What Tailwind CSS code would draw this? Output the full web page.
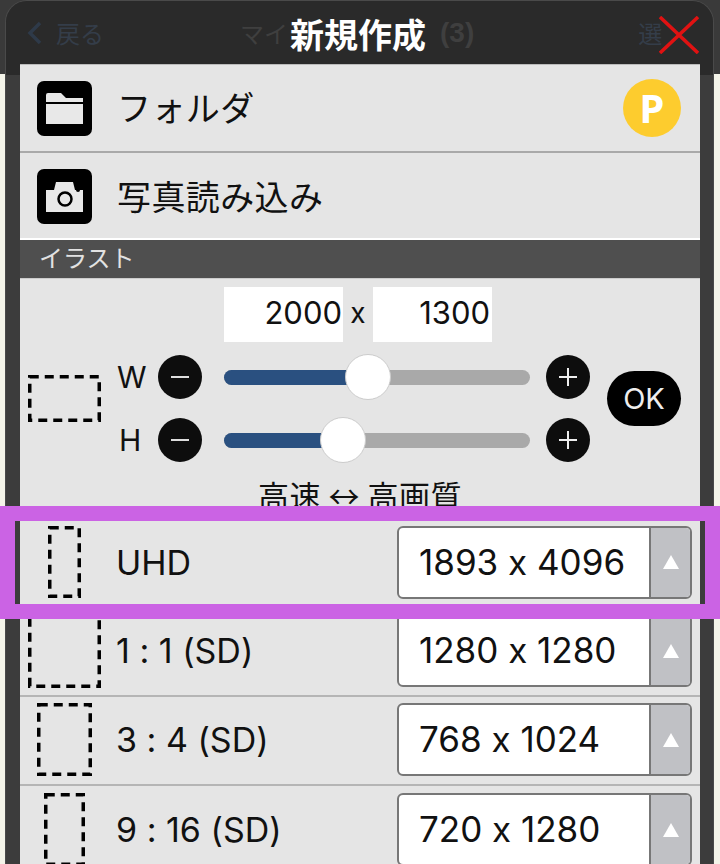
<!DOCTYPE html>
<html lang="ja">
<head>
  <meta charset="UTF-8" />
  <meta name="viewport" content="width=device-width, initial-scale=1.0" />
  <title>新規作成</title>
  <script src="https://cdn.jsdelivr.net/npm/@tailwindcss/browser@4"></script>
</head>
<body class="relative w-[720px] h-[864px] overflow-hidden bg-[#f4f4e9] font-['Inter','Noto_Sans_CJK_JP',sans-serif] [font-variant-ligatures:no-contextual] text-[#111]">
  <!-- page nav behind the sheet -->
  <div class="absolute inset-x-0 top-0 h-[74px] bg-[#3a3a3a]"></div>

  <div class="relative ml-[5px] w-[709px] h-[864px] overflow-hidden rounded-t-[22px] border-t border-x border-[#4a4a4a] bg-[#3c3c3c]">
    <div class="absolute inset-x-0 top-0 h-[74px] bg-[#2a2a2a]"></div>
    <!-- header -->
    <div class="relative flex items-center h-[63px] text-[#343d49]">
      <svg class="ml-[20px] w-[16px] h-[24px]" viewBox="0 0 16 24" fill="none" stroke="#2e3a49" stroke-width="3.5"><path d="M14 2 4 12l10 10" /></svg>
      <span class="ml-[14px] text-[24px] font-['Noto_Sans_CJK_JP']">戻る</span>
      <span class="ml-[136px] text-[24px] text-[#3f3f3f] font-['Noto_Sans_CJK_JP']">マイ</span>
      <span class="ml-[152px] text-[28px] font-bold text-[#3f3f3f] font-['Liberation_Sans']">(3)</span>
      <span class="ml-[164px] text-[24px] font-['Noto_Sans_CJK_JP']">選</span>
      <div class="absolute inset-0 flex items-center justify-center pr-[3px] pt-[2px] text-[34px] font-bold text-white font-['Noto_Sans_CJK_JP'] leading-none">新規作成</div>
      <svg class="absolute left-[653px] top-[15px] w-[40px] h-[38px]" viewBox="0 0 40 38" fill="none" stroke="#e01212" stroke-width="3.5"><path d="m1 1 38 36M39 1 1 37" /></svg>
    </div>

    <div class="relative ml-[14px] w-[680px] bg-[#e5e5e5]">
      <!-- folder -->
      <div class="flex items-center h-[89px] border-b-2 border-[#a9a9a9] border-t border-t-[#bbb]">
        <svg class="ml-[17px] w-[55px] h-[55px] shrink-0" viewBox="0 0 55 55">
          <rect width="55" height="55" rx="7" fill="#000" />
          <path d="M9 21v-7q0-2 2-2h13l5 5h17v4z" fill="#e8e8e8" />
          <rect x="9" y="23" width="37" height="20" fill="#e8e8e8" />
        </svg>
        <span class="ml-[25px] mb-[2px] text-[34px] tracking-[0.4px] font-['Noto_Sans_CJK_JP'] leading-none">フォルダ</span>
        <div class="ml-auto mr-[19px] flex items-center justify-center w-[58px] h-[58px] rounded-full bg-[#fdcc2e] text-white text-[40px] font-bold font-['Noto_Sans'] leading-none">P</div>
      </div>
      <!-- photo import -->
      <div class="flex items-center h-[87px] pt-[2px] border-b-2 border-white">
        <svg class="ml-[17px] w-[55px] h-[55px] shrink-0" viewBox="0 0 55 55">
          <rect width="55" height="55" rx="7" fill="#000" />
          <path d="M9 21h8l2-8h17l2 8h8v22H9z" fill="#e8e8e8" />
          <circle cx="28" cy="30" r="6.5" fill="#e8e8e8" stroke="#000" stroke-width="2.5" />
          <circle cx="41" cy="21" r="2" fill="#000" />
        </svg>
        <span class="ml-[25px] mb-[2px] text-[34px] tracking-[0.4px] font-['Noto_Sans_CJK_JP'] leading-none">写真読み込み</span>
      </div>
      <!-- section -->
      <div class="flex items-center h-[38px] pl-[19px] pb-[4px] bg-[#4f4f4f] text-[#e2e2e2] text-[24px] font-['Noto_Sans_CJK_JP'] leading-none">イラスト</div>

      <!-- custom size panel -->
      <div class="h-[241px] pt-[8px] border-t border-[#ccc] overflow-hidden">
        <div class="flex items-center ml-[204px] h-[55px] text-[31px]">
          <div class="w-[119px] h-[55px] bg-white flex items-center justify-end pr-[1px] pb-[3px]">2000</div>
          <div class="w-[30px] text-center text-[28px] pb-[3px]">x</div>
          <div class="w-[119px] h-[55px] bg-white flex items-center justify-end pr-[2px] pb-[3px]">1300</div>
        </div>
        <div class="flex mt-[13px]">
          <svg class="ml-[8px] mt-[20px] w-[73px] h-[47px] shrink-0" viewBox="0 0 73 47" fill="none" stroke="#000" stroke-width="3.5"><rect x="1.75" y="1.75" width="69.5" height="43.5" stroke-dasharray="9 6" /></svg>
          <div class="flex flex-col gap-[19px]">
            <div class="flex items-center h-[44px]">
              <span class="ml-[16px] w-[41px] text-[30px]">W</span>
              <svg class="w-[44px] h-[44px]" viewBox="0 0 44 44"><circle cx="22" cy="22" r="22" fill="#0d0d0d" /><path d="M13 22h18" stroke="#ddd" stroke-width="2" /></svg>
              <div class="relative ml-[22px] w-[306px] h-[15px] rounded-full bg-[#a9a9a9]">
                <div class="h-full w-[144px] rounded-l-full bg-[#2a5080]"></div>
                <div class="absolute left-[121px] top-[-16px] w-[46px] h-[46px] rounded-full bg-white border border-[#ccc]"></div>
              </div>
              <svg class="ml-[16px] w-[44px] h-[44px]" viewBox="0 0 44 44"><circle cx="22" cy="22" r="22" fill="#0d0d0d" /><path d="M13 22h18M22 13v18" stroke="#eee" stroke-width="2" /></svg>
            </div>
            <div class="flex items-center h-[44px]">
              <span class="ml-[18px] w-[39px] text-[30px]">H</span>
              <svg class="w-[44px] h-[44px]" viewBox="0 0 44 44"><circle cx="22" cy="22" r="22" fill="#0d0d0d" /><path d="M13 22h18" stroke="#ddd" stroke-width="2" /></svg>
              <div class="relative ml-[22px] w-[306px] h-[15px] rounded-full bg-[#a9a9a9]">
                <div class="h-full w-[119px] rounded-l-full bg-[#2a5080]"></div>
                <div class="absolute left-[96px] top-[-16px] w-[46px] h-[46px] rounded-full bg-white border border-[#ccc]"></div>
              </div>
              <svg class="ml-[16px] w-[44px] h-[44px]" viewBox="0 0 44 44"><circle cx="22" cy="22" r="22" fill="#0d0d0d" /><path d="M13 22h18M22 13v18" stroke="#eee" stroke-width="2" /></svg>
            </div>
          </div>
          <div class="ml-[17px] mt-[16px] flex items-center justify-center w-[74px] h-[55px] rounded-full bg-black text-[#eee] text-[29px]">OK</div>
        </div>
        <div class="mt-[17px] text-center text-[31px] leading-[31px] tracking-[0.5px] font-['Noto_Sans_CJK_JP']">高速 ↔ 高画質</div>
      </div>

      <!-- presets -->
      <div class="flex items-center h-[89px] pb-[2px] border-b border-[#aaa] text-[34px]">
        <div class="flex justify-center w-[89px]"><svg class="w-[33px] h-[72px]" viewBox="0 0 33 72" fill="none" stroke="#000" stroke-width="3.5"><rect x="1.75" y="1.75" width="29.5" height="68.5" stroke-dasharray="9 6" /></svg></div>
        <span class="ml-[7px]">UHD</span>
        <div class="ml-auto mr-[8px] flex w-[295px] h-[73px] rounded-[6px] border-2 border-[#777] bg-white overflow-hidden">
          <div class="flex-1 flex items-center pl-[20px] text-[35px]"><span>1893 x 4096</span></div>
          <div class="flex items-center justify-center w-[41px] border-l-2 border-[#777] bg-[#c0c1c5]"><svg class="w-[16px] h-[14px]" viewBox="0 0 16 14"><path d="M8 0l8 14H0z" fill="#fff" /></svg></div>
        </div>
      </div>
      <div class="flex items-center h-[89px] pb-[2px] border-b-2 border-[#b5b5b5] text-[34px]">
        <div class="flex justify-center w-[89px]"><svg class="w-[73px] h-[75px]" viewBox="0 0 73 75" fill="none" stroke="#000" stroke-width="3.5"><rect x="1.75" y="1.75" width="69.5" height="71.5" stroke-dasharray="9 6" /></svg></div>
        <span class="ml-[7px]">1 : 1 (SD)</span>
        <div class="ml-auto mr-[8px] flex w-[295px] h-[73px] rounded-[6px] border-2 border-[#777] bg-white overflow-hidden">
          <div class="flex-1 flex items-center pl-[20px] text-[35px]"><span>1280 x 1280</span></div>
          <div class="flex items-center justify-center w-[41px] border-l-2 border-[#777] bg-[#c0c1c5]"><svg class="w-[16px] h-[14px]" viewBox="0 0 16 14"><path d="M8 0l8 14H0z" fill="#fff" /></svg></div>
        </div>
      </div>
      <div class="flex items-center h-[89px] pb-[2px] border-b-2 border-[#b5b5b5] text-[34px]">
        <div class="flex justify-center w-[89px]"><svg class="w-[55px] h-[73px]" viewBox="0 0 55 73" fill="none" stroke="#000" stroke-width="3.5"><rect x="1.75" y="1.75" width="51.5" height="69.5" stroke-dasharray="9 6" /></svg></div>
        <span class="ml-[7px]">3 : 4 (SD)</span>
        <div class="ml-auto mr-[8px] flex w-[295px] h-[73px] rounded-[6px] border-2 border-[#777] bg-white overflow-hidden">
          <div class="flex-1 flex items-center pl-[20px] text-[35px]"><span>768 x 1024</span></div>
          <div class="flex items-center justify-center w-[41px] border-l-2 border-[#777] bg-[#c0c1c5]"><svg class="w-[16px] h-[14px]" viewBox="0 0 16 14"><path d="M8 0l8 14H0z" fill="#fff" /></svg></div>
        </div>
      </div>
      <div class="flex items-center h-[89px] pb-[2px] text-[34px]">
        <div class="flex justify-center w-[89px]"><svg class="w-[41px] h-[73px]" viewBox="0 0 41 73" fill="none" stroke="#000" stroke-width="3.5"><rect x="1.75" y="1.75" width="37.5" height="69.5" stroke-dasharray="9 6" /></svg></div>
        <span class="ml-[7px]">9 : 16 (SD)</span>
        <div class="ml-auto mr-[8px] flex w-[295px] h-[73px] rounded-[6px] border-2 border-[#777] bg-white overflow-hidden">
          <div class="flex-1 flex items-center pl-[20px] text-[35px]"><span>720 x 1280</span></div>
          <div class="flex items-center justify-center w-[41px] border-l-2 border-[#777] bg-[#c0c1c5]"><svg class="w-[16px] h-[14px]" viewBox="0 0 16 14"><path d="M8 0l8 14H0z" fill="#fff" /></svg></div>
        </div>
      </div>
    </div>
  </div>

  <!-- highlight frame over the UHD row -->
  <div class="absolute left-0 top-[506px] w-[720px] h-[113px] border-[15px] border-[#cb63e4]"></div>
</body>
</html>
